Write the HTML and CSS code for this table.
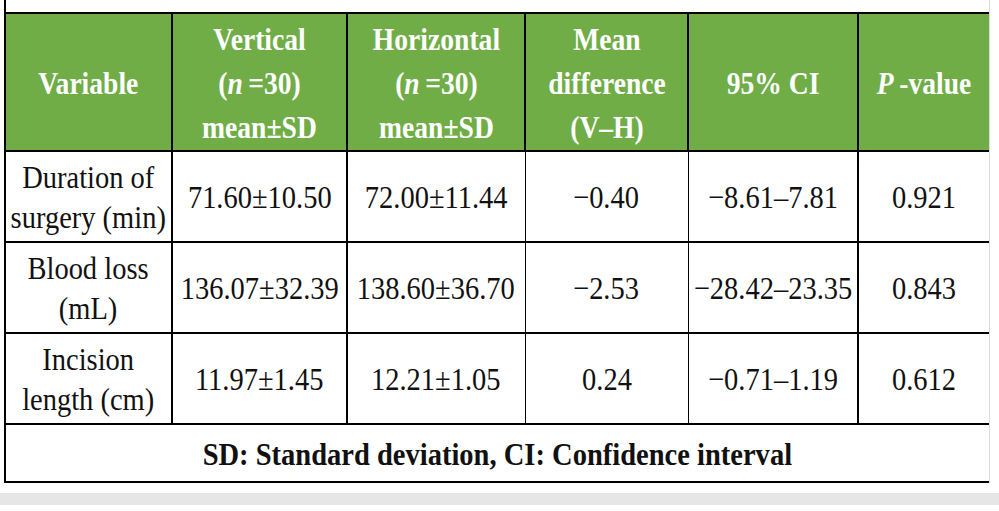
FILE: index.html
```html
<!DOCTYPE html>
<html lang="en">
<head>
<meta charset="utf-8">
<title>Table</title>
<link rel="stylesheet" href="styles.css">
</head>
<body>
<div class="frame">
  <table class="tbl">
    <colgroup>
      <col class="c1"><col class="c2"><col class="c3"><col class="c4"><col class="c5"><col class="c6">
    </colgroup>
    <thead>
      <tr class="hd">
        <th><span class="sx">Variable</span></th>
        <th><span class="sx">Vertical<br>(<i>n</i>&thinsp;=30)<br>mean±SD</span></th>
        <th><span class="sx">Horizontal<br>(<i>n</i>&thinsp;=30)<br>mean±SD</span></th>
        <th><span class="sx">Mean<br>difference<br>(V–H)</span></th>
        <th><span class="sx">95% CI</span></th>
        <th><span class="sx"><i>P</i>&thinsp;-value</span></th>
      </tr>
    </thead>
    <tbody>
      <tr class="row">
        <td><span class="sx">Duration of<br>surgery (min)</span></td>
        <td><span class="sx">71.60±10.50</span></td>
        <td><span class="sx">72.00±11.44</span></td>
        <td><span class="sx">−0.40</span></td>
        <td><span class="sx">−8.61–7.81</span></td>
        <td><span class="sx">0.921</span></td>
      </tr>
      <tr class="row">
        <td><span class="sx">Blood loss<br>(mL)</span></td>
        <td><span class="sx">136.07±32.39</span></td>
        <td><span class="sx">138.60±36.70</span></td>
        <td><span class="sx">−2.53</span></td>
        <td><span class="sx">−28.42–23.35</span></td>
        <td><span class="sx">0.843</span></td>
      </tr>
      <tr class="row">
        <td><span class="sx">Incision<br>length (cm)</span></td>
        <td><span class="sx">11.97±1.45</span></td>
        <td><span class="sx">12.21±1.05</span></td>
        <td><span class="sx">0.24</span></td>
        <td><span class="sx">−0.71–1.19</span></td>
        <td><span class="sx">0.612</span></td>
      </tr>
    </tbody>
    <tfoot>
      <tr class="ft">
        <td colspan="6"><span class="sx wide">SD: Standard deviation, CI: Confidence interval</span></td>
      </tr>
    </tfoot>
  </table>
</div>
<div class="band"></div>
</body>
</html>
```
FILE: styles.css
```css
html, body {
  margin: 0;
  padding: 0;
  background: #ffffff;
}

body {
  font-family: "Liberation Serif", "Times New Roman", serif;
  color: #111111;
  width: 999px;
  overflow: hidden;
}

.frame {
  margin-left: 4px;
  width: 986px;
  box-sizing: border-box;
  padding-top: 12px;
  border-left: 2px solid #000;
  border-right: 1px solid #dcdcdc;
}

.tbl {
  width: 983px;
  border-collapse: collapse;
  table-layout: fixed;
  border: none;
}

.c1 { width: 166px; }
.c2 { width: 175px; }
.c3 { width: 178px; }
.c4 { width: 163px; }
.c5 { width: 170px; }
.c6 { width: 131px; }

.tbl th,
.tbl td {
  border-style: solid;
  border-color: #000;
  border-width: 2px 2px 2px 2px;
  padding: 0;
  text-align: center;
  vertical-align: middle;
  white-space: nowrap;
}

.tbl th:first-child,
.tbl td:first-child {
  border-left-width: 0;
}

.tbl th:last-child,
.tbl td:last-child {
  border-right-width: 0;
}

.sx {
  display: inline-block;
  margin: 0 -40px;
  transform: scaleX(0.89);
  transform-origin: center;
}

.sx.wide {
  margin: 0;
  transform: scaleX(0.92);
}

.hd {
  height: 138px;
}

.hd th {
  background: #70ad47;
  color: #ffffff;
  font-weight: bold;
  font-size: 31px;
  line-height: 44px;
  padding-top: 4px;
}

.hd th i {
  font-weight: bold;
}

.row {
  height: 91px;
}

.row td {
  font-size: 32px;
  line-height: 40px;
}

.row td:nth-child(3) { border-right-width: 1px; }
.row td:nth-child(4) { border-left-width: 1px; border-right-width: 1px; }
.row td:nth-child(5) { border-left-width: 1px; }

.ft {
  height: 58px;
}

.tbl .ft td {
  font-size: 31px;
  font-weight: bold;
  line-height: 36px;
  padding-top: 4px;
  border-left-width: 0;
  border-right-width: 0;
}

.band {
  margin-top: 10px;
  height: 12px;
  background: #e6e6e6;
}
```
